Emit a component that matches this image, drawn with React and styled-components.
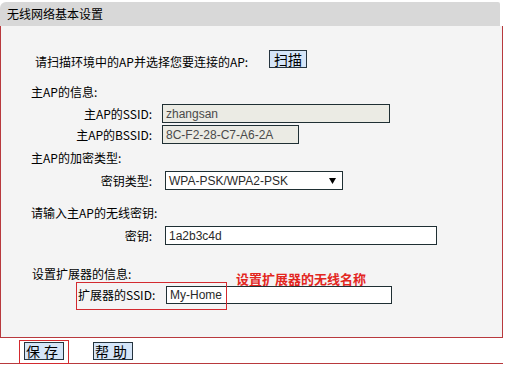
import React from "react";
import styled, { createGlobalStyle } from "styled-components";

const Global = createGlobalStyle`
  html, body { margin: 0; padding: 0; background: #ffffff; }
  body { font-family: "Noto Sans CJK SC", "Liberation Sans", sans-serif; font-size: 12px; color: #000; }
`;

const Page = styled.div`
  width: 503px;
  padding-top: 2px;
  position: relative;
`;

const TitleBar = styled.div`
  width: 500px;
  height: 24px;
  box-sizing: border-box;
  background: #d8d8d8;
  border-top-left-radius: 6px;
  border-top-right-radius: 2px;
  padding-left: 7px;
  display: flex;
  align-items: center;
  font-size: 12px;
  line-height: 1;
`;

const Panel = styled.div`
  height: 311px;
  box-sizing: border-box;
  background: #f4f4f4;
  border-left: 1px solid #b8393d;
  border-right: 1px solid #b8393d;
  display: flex;
  flex-direction: column;
`;

const ScanRow = styled.div`
  margin-top: 24px;
  height: 18px;
  padding-left: 34px;
  display: flex;
  align-items: center;
`;

const ScanText = styled.span`
  width: 234px;
  line-height: 1;
  padding-top: 5px;
`;

const Button = styled.button`
  height: 18px;
  width: ${(p) => p.$w || 40}px;
  box-sizing: border-box;
  margin: 0;
  padding: 0;
  background: #d5e5f8;
  border: 1px solid #25343f;
  font-family: "Noto Sans CJK SC", sans-serif;
  font-size: 14px;
  line-height: 16px;
  color: #000;
  letter-spacing: ${(p) => p.$ls || 0}px;
  display: flex;
  align-items: center;
  justify-content: center;
`;

const Section = styled.div`
  margin-top: ${(p) => p.$top}px;
  height: 16px;
  line-height: 16px;
  padding-left: ${(p) => p.$indent || 30}px;
`;

const FieldRow = styled.div`
  margin-top: ${(p) => p.$top}px;
  display: grid;
  grid-template-columns: 151px auto;
  column-gap: ${(p) => p.$gap}px;
  align-items: center;
  justify-content: start;
`;

const Label = styled.span`
  text-align: right;
  line-height: 1;
`;

const TextInput = styled.input`
  width: ${(p) => p.$w}px;
  height: ${(p) => p.$h || 19}px;
  box-sizing: border-box;
  margin: 0;
  padding: 0 0 0 3px;
  border: 1px solid #1f2f33;
  border-radius: 0;
  background: ${(p) => (p.$disabled ? "#ebebe4" : "#ffffff")};
  color: ${(p) => (p.$disabled ? "#4a4a4a" : "#2a2a2a")};
  font-family: "Liberation Sans", Arial, sans-serif;
  font-size: 12px;
  outline: none;
`;

const SelectBox = styled.div`
  width: 178px;
  height: 19px;
  box-sizing: border-box;
  border: 1px solid #1f2f33;
  background: #ffffff;
  color: #2a2a2a;
  font-family: "Liberation Sans", Arial, sans-serif;
  font-size: 12px;
  padding: 0 6px 0 3px;
  display: flex;
  align-items: center;
  justify-content: space-between;
`;

const ExtSection = styled.div`
  position: relative;
`;

const ExtRow = styled.div`
  margin-top: 4px;
  padding-left: 77px;
  display: grid;
  grid-template-columns: 88px auto;
  align-items: center;
  justify-content: start;
`;

const ExtLabel = styled.span`
  line-height: 1;
`;

const Note = styled.span`
  position: absolute;
  left: 235px;
  top: 27px;
  color: #e3261e;
  font-weight: bold;
  font-size: 13px;
  line-height: 14px;
`;

const MarkBox = styled.div`
  position: absolute;
  left: ${(p) => p.$x}px;
  top: ${(p) => p.$y}px;
  width: ${(p) => p.$w}px;
  height: ${(p) => p.$h}px;
  box-sizing: border-box;
  border: 1px solid #d32a2f;
  pointer-events: none;
`;

const Footer = styled.div`
  height: 27px;
  box-sizing: border-box;
  background: #ffffff;
  border-top: 1px solid #b8393d;
  border-bottom: 1px solid #b8393d;
  padding-left: 24px;
  display: flex;
  align-items: center;
  gap: 29px;
`;

export default function App() {
  return (
    <>
      <Global />
      <Page>
        <TitleBar>无线网络基本设置</TitleBar>
        <Panel>
          <ScanRow>
            <ScanText>请扫描环境中的AP并选择您要连接的AP:</ScanText>
            <Button $w={38}>扫描</Button>
          </ScanRow>

          <Section $top={16}>主AP的信息:</Section>
          <FieldRow $top={4} $gap={10}>
            <Label>主AP的SSID:</Label>
            <TextInput $w={228} $disabled readOnly value="zhangsan" />
          </FieldRow>
          <FieldRow $top={2} $gap={10}>
            <Label>主AP的BSSID:</Label>
            <TextInput $w={137} $disabled readOnly value="8C-F2-28-C7-A6-2A" />
          </FieldRow>

          <Section $top={6}>主AP的加密类型:</Section>
          <FieldRow $top={5} $gap={13}>
            <Label>密钥类型:</Label>
            <SelectBox>
              <span>WPA-PSK/WPA2-PSK</span>
              <svg width="7" height="6" viewBox="0 0 7 6">
                <path d="M0 0 H7 L3.5 6 Z" fill="#000" />
              </svg>
            </SelectBox>
          </FieldRow>

          <Section $top={15}>请输入主AP的无线密钥:</Section>
          <FieldRow $top={5} $gap={13}>
            <Label>密钥:</Label>
            <TextInput $w={272} readOnly value="1a2b3c4d" />
          </FieldRow>

          <ExtSection>
            <Section $top={21} $indent={31}>设置扩展器的信息:</Section>
            <ExtRow>
              <ExtLabel>扩展器的SSID:</ExtLabel>
              <TextInput $w={226} $h={18} readOnly value="My-Home" />
            </ExtRow>
            <Note>设置扩展器的无线名称</Note>
            <MarkBox $x={75} $y={37} $w={151} $h={28} />
          </ExtSection>
        </Panel>
        <Footer>
          <Button $ls={4}>保存</Button>
          <Button $ls={4}>帮助</Button>
        </Footer>
        <MarkBox $x={19} $y={340} $w={50} $h={24} />
      </Page>
    </>
  );
}
